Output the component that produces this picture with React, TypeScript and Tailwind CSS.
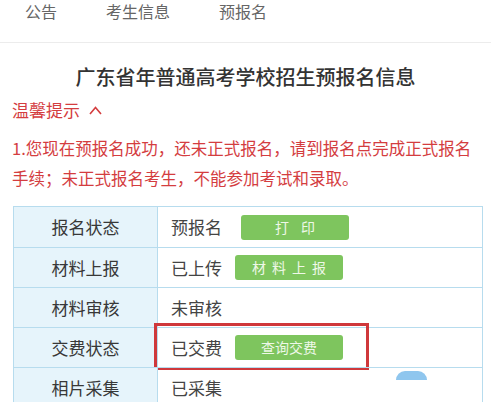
const font = { fontFamily: '"Noto Sans CJK SC", "Noto Sans", sans-serif' };

const rows = [
  { label: "报名状态", value: "预报名", button: "打印", gap: "ml-[19px]", btn: "tracking-[12px] pl-[12px]" },
  { label: "材料上报", value: "已上传", button: "材料上报", gap: "ml-[13px]", btn: "tracking-[6px] pl-[6px]" },
  { label: "材料审核", value: "未审核" },
  { label: "交费状态", value: "已交费", button: "查询交费", gap: "ml-[13px]", btn: "", mark: true },
  { label: "相片采集", value: "已采集", bubble: true },
];

export default function App() {
  return (
    <div className="w-[491px] h-[402px] overflow-hidden bg-white" style={font}>
      {/* top tabs */}
      <nav className="h-[43px] pt-[1px] border-b-[1.5px] border-[#ececec] flex gap-[49px] pl-[25px] text-[16px] leading-[20px] text-[#666]">
        <span>公告</span>
        <span>考生信息</span>
        <span>预报名</span>
      </nav>

      <h1 className="mt-[20px] text-center text-[20px] leading-[28px] font-medium text-[#333]">
        广东省年普通高考学校招生预报名信息
      </h1>

      <div className="mt-[7px] pl-[12px] flex items-center gap-[9px] text-[17px] leading-[24px] text-[#d43d3f]">
        <span>温馨提示</span>
        <svg width="13" height="9" viewBox="0 0 13 9" fill="none">
          <path d="M1 8 L6.5 1.5 L12 8" stroke="#d43d3f" strokeWidth="1.6" />
        </svg>
      </div>

      <p className="mt-[11px] pl-[12px] pr-[8px] text-[16.5px] leading-[30px] text-[#d43d3f]">
        1.您现在预报名成功，还未正式报名，请到报名点完成正式报名手续；未正式报名考生，不能参加考试和录取。
      </p>

      {/* status table */}
      <div className="mt-[13px] ml-[13px] mr-[8px] border border-[#b7dcee]">
        {rows.map((r, i) => (
          <div
            key={r.label}
            className={`relative flex h-[40px] ${i > 0 ? "border-t border-[#b7dcee]" : ""}`}
          >
            <div className="w-[144px] shrink-0 border-r border-[#b7dcee] bg-[#e6f4fb] flex items-center justify-center text-[17px] text-[#383838]">
              {r.label}
            </div>
            <div className="flex items-center pl-[13px] text-[17px] text-[#444]">
              <span>{r.value}</span>
              {r.button && (
                <span
                  className={`${r.gap} ${r.btn} w-[108px] h-[25px] rounded-[3px] bg-[#7ec55e] text-[#eef8e8] text-[14px] flex items-center justify-center`}
                >
                  {r.button}
                </span>
              )}
            </div>
            {r.mark && (
              <div className="absolute left-[140px] -top-[5px] w-[215px] h-[47px] border-[3px] border-[#cf383b]" />
            )}
            {r.bubble && (
              <div className="absolute left-[382px] top-[3px] w-[31px] h-[9px] rounded-t-full bg-[#8fc6ee] blur-[0.5px]" />
            )}
          </div>
        ))}
      </div>
    </div>
  );
}
